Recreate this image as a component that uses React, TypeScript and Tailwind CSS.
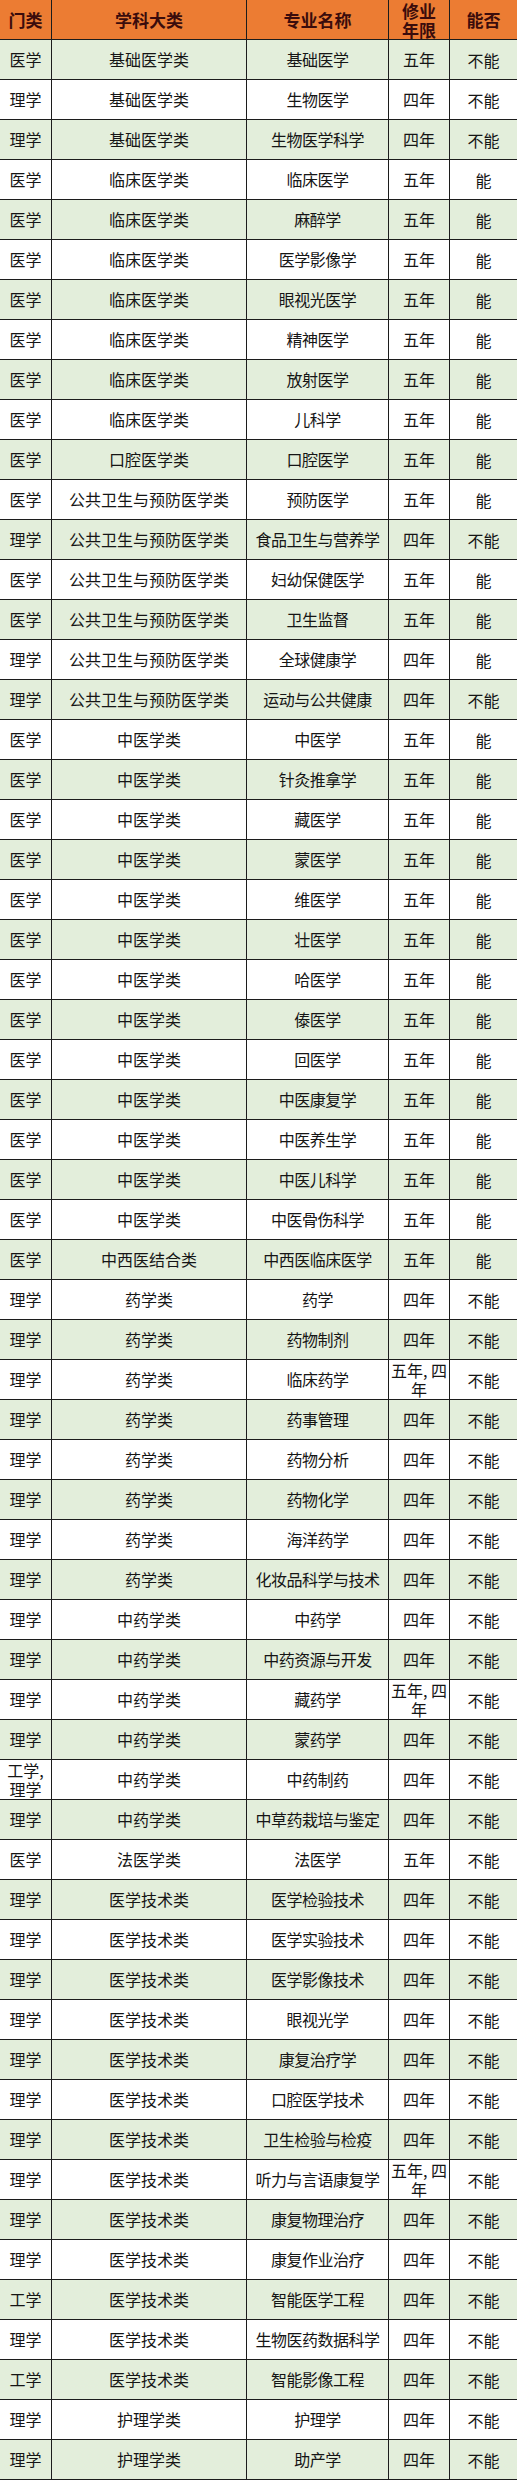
import React from "react";

type Row = [string, string, string, string, string];

// explicit break so the cell wraps like the original sheet
const FIVE_FOUR = "五年, 四\n年";

// 门类, 学科大类, 专业名称, 修业年限, 能否
const rows: Row[] = [
  ["医学", "基础医学类", "基础医学", "五年", "不能"],
  ["理学", "基础医学类", "生物医学", "四年", "不能"],
  ["理学", "基础医学类", "生物医学科学", "四年", "不能"],
  ["医学", "临床医学类", "临床医学", "五年", "能"],
  ["医学", "临床医学类", "麻醉学", "五年", "能"],
  ["医学", "临床医学类", "医学影像学", "五年", "能"],
  ["医学", "临床医学类", "眼视光医学", "五年", "能"],
  ["医学", "临床医学类", "精神医学", "五年", "能"],
  ["医学", "临床医学类", "放射医学", "五年", "能"],
  ["医学", "临床医学类", "儿科学", "五年", "能"],
  ["医学", "口腔医学类", "口腔医学", "五年", "能"],
  ["医学", "公共卫生与预防医学类", "预防医学", "五年", "能"],
  ["理学", "公共卫生与预防医学类", "食品卫生与营养学", "四年", "不能"],
  ["医学", "公共卫生与预防医学类", "妇幼保健医学", "五年", "能"],
  ["医学", "公共卫生与预防医学类", "卫生监督", "五年", "能"],
  ["理学", "公共卫生与预防医学类", "全球健康学", "四年", "能"],
  ["理学", "公共卫生与预防医学类", "运动与公共健康", "四年", "不能"],
  ["医学", "中医学类", "中医学", "五年", "能"],
  ["医学", "中医学类", "针灸推拿学", "五年", "能"],
  ["医学", "中医学类", "藏医学", "五年", "能"],
  ["医学", "中医学类", "蒙医学", "五年", "能"],
  ["医学", "中医学类", "维医学", "五年", "能"],
  ["医学", "中医学类", "壮医学", "五年", "能"],
  ["医学", "中医学类", "哈医学", "五年", "能"],
  ["医学", "中医学类", "傣医学", "五年", "能"],
  ["医学", "中医学类", "回医学", "五年", "能"],
  ["医学", "中医学类", "中医康复学", "五年", "能"],
  ["医学", "中医学类", "中医养生学", "五年", "能"],
  ["医学", "中医学类", "中医儿科学", "五年", "能"],
  ["医学", "中医学类", "中医骨伤科学", "五年", "能"],
  ["医学", "中西医结合类", "中西医临床医学", "五年", "能"],
  ["理学", "药学类", "药学", "四年", "不能"],
  ["理学", "药学类", "药物制剂", "四年", "不能"],
  ["理学", "药学类", "临床药学", FIVE_FOUR, "不能"],
  ["理学", "药学类", "药事管理", "四年", "不能"],
  ["理学", "药学类", "药物分析", "四年", "不能"],
  ["理学", "药学类", "药物化学", "四年", "不能"],
  ["理学", "药学类", "海洋药学", "四年", "不能"],
  ["理学", "药学类", "化妆品科学与技术", "四年", "不能"],
  ["理学", "中药学类", "中药学", "四年", "不能"],
  ["理学", "中药学类", "中药资源与开发", "四年", "不能"],
  ["理学", "中药学类", "藏药学", FIVE_FOUR, "不能"],
  ["理学", "中药学类", "蒙药学", "四年", "不能"],
  ["工学,\n理学", "中药学类", "中药制药", "四年", "不能"],
  ["理学", "中药学类", "中草药栽培与鉴定", "四年", "不能"],
  ["医学", "法医学类", "法医学", "五年", "不能"],
  ["理学", "医学技术类", "医学检验技术", "四年", "不能"],
  ["理学", "医学技术类", "医学实验技术", "四年", "不能"],
  ["理学", "医学技术类", "医学影像技术", "四年", "不能"],
  ["理学", "医学技术类", "眼视光学", "四年", "不能"],
  ["理学", "医学技术类", "康复治疗学", "四年", "不能"],
  ["理学", "医学技术类", "口腔医学技术", "四年", "不能"],
  ["理学", "医学技术类", "卫生检验与检疫", "四年", "不能"],
  ["理学", "医学技术类", "听力与言语康复学", FIVE_FOUR, "不能"],
  ["理学", "医学技术类", "康复物理治疗", "四年", "不能"],
  ["理学", "医学技术类", "康复作业治疗", "四年", "不能"],
  ["工学", "医学技术类", "智能医学工程", "四年", "不能"],
  ["理学", "医学技术类", "生物医药数据科学", "四年", "不能"],
  ["工学", "医学技术类", "智能影像工程", "四年", "不能"],
  ["理学", "护理学类", "护理学", "四年", "不能"],
  ["理学", "护理学类", "助产学", "四年", "不能"],
];

const cols = "grid grid-cols-[52px_195px_142px_61px_67px]";
const cell = "flex items-center justify-center text-center border-r border-[#1c1c1c] px-[3px] leading-[19px]";

export default function App() {
  return (
    <div
      className="w-[517px] min-h-[2488px] bg-white text-[#151515] text-[16px]"
      style={{ fontFamily: '"Noto Sans CJK SC", "Noto Sans", sans-serif' }}
    >
      {/* Header */}
      <div className={`${cols} h-10 bg-[#ec7c33] border-b border-[#1c1c1c] font-bold text-[#3a0c0c] text-[17px]`}>
        <div className={cell}>门类</div>
        <div className={cell}>学科大类</div>
        <div className={cell}>专业名称</div>
        <div className={`${cell} leading-[18px] px-[12px]`}>修业年限</div>
        <div className="flex items-center justify-center">能否</div>
      </div>

      {/* Rows */}
      {rows.map((r, idx) => (
        <div
          key={idx}
          className={`${cols} h-10 border-b border-[#1c1c1c] ${idx % 2 === 0 ? "bg-[#e3eedb]" : "bg-white"}`}
        >
          <div className={`${cell} px-0 whitespace-pre leading-[18px]`}>{r[0]}</div>
          <div className={cell}>{r[1]}</div>
          <div className={`${cell} tracking-[-0.5px]`}>{r[2]}</div>
          <div className={`${cell} px-0 whitespace-pre leading-[18px]`}>{r[3]}</div>
          <div className="flex items-center justify-center">{r[4]}</div>
        </div>
      ))}
    </div>
  );
}
